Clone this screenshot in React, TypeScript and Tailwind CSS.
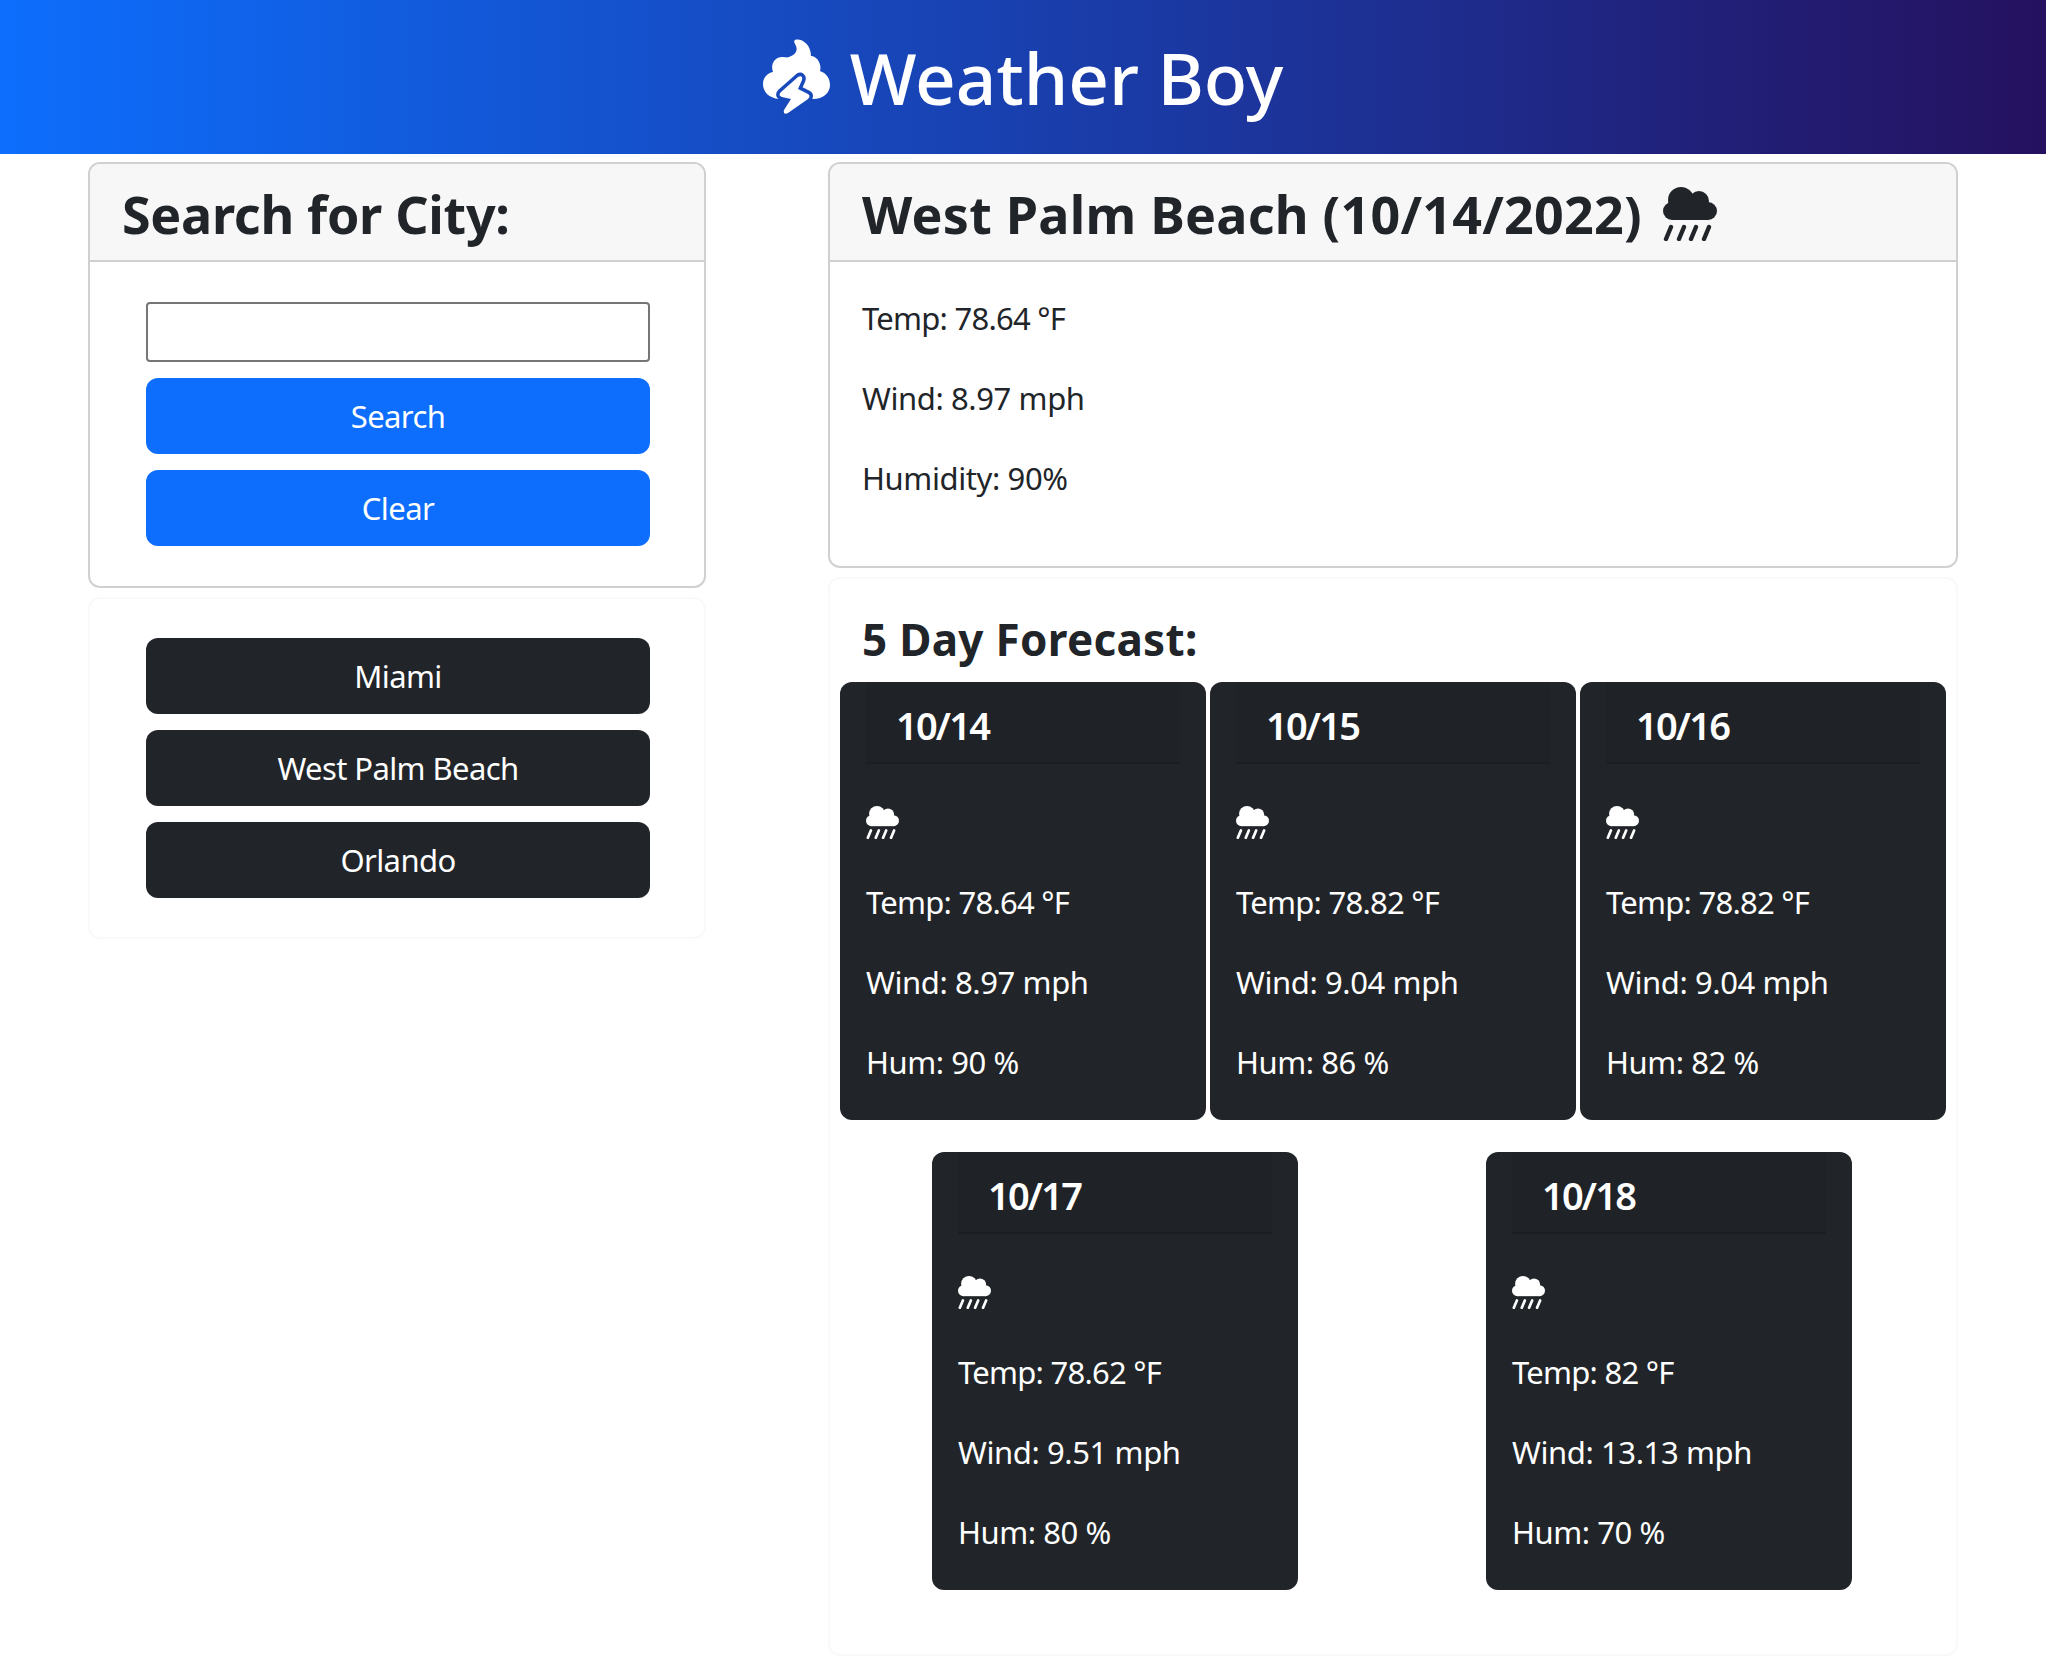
import React from "react";

const F = "font-['Noto_Sans','Open_Sans',sans-serif]";

function Rain({ className }: { className: string }) {
  return (
    <svg viewBox="0 0 54 54" className={className} fill="currentColor" aria-hidden="true">
      <circle cx="18" cy="13" r="13" />
      <circle cx="36" cy="14" r="10" />
      <circle cx="9" cy="24" r="9" />
      <circle cx="45" cy="24" r="9" />
      <rect x="9" y="14" width="36" height="19" />
      <g stroke="currentColor" strokeWidth="4.4" strokeLinecap="round" fill="none">
        <path d="M8 40 3 52" />
        <path d="M21 40 16 52" />
        <path d="M33 40 28 52" />
        <path d="M46 40 41 52" />
      </g>
    </svg>
  );
}

function Logo() {
  return (
    <svg viewBox="0 0 67 76" className="w-[67px] h-[76px] shrink-0" aria-hidden="true">
      <path
        fill="#fff"
        d="M32 1C38 -1 48 5 48 17C54 17 59 25 57 32C63 34 67 39 67 46C67 54 60 60 50 60L16 60C6 59 0 53 0 45C0 39 4 34 10 33C7 25 12 18 19 18C22 18 24 19 26 18C32 16 35 12 33 7C32 4 30 3 32 1Z"
      />
      <path
        fill="#fff"
        stroke="#1749bb"
        strokeWidth="7"
        strokeLinejoin="round"
        paintOrder="stroke"
        d="M18 53 35 38C38 36 40 38 39 41L35 50 45 55C47 56 47 58 45 60L25 74C22 76 20 74 21 71L28 60 19 58C16 57 16 55 18 53Z"
      />
    </svg>
  );
}

function Forecast({ date, temp, wind, hum }: { date: string; temp: string; wind: string; hum: string }) {
  return (
    <div className="w-[366px] h-[438px] rounded-xl bg-[#212529] text-white px-[26px]">
      <div className="h-[82px] bg-black/[0.03] border-b-2 border-black/[0.125] pl-[30px] pr-8 pt-[19px]">
        <h5 className="text-[38px] leading-[48px] font-semibold tracking-[-1.8px]">{date}</h5>
      </div>
      <div className="h-[114px] flex items-center pt-[2px]">
        <Rain className="w-[33px] h-[33px] text-white" />
      </div>
      <p className="text-[31px] leading-[48px] mb-8 tracking-[-0.75px]">Temp: {temp} °F</p>
      <p className="text-[31px] leading-[48px] mb-8 tracking-[-0.4px]">Wind: {wind} mph</p>
      <p className="text-[31px] leading-[48px] tracking-[-0.45px]">Hum: {hum} %</p>
    </div>
  );
}

function Btn({ children, dark }: { children: string; dark?: boolean }) {
  return (
    <button
      type="button"
      className={`h-[76px] w-full rounded-xl text-white text-[31px] leading-[48px] tracking-[-0.6px] ${dark ? "bg-[#212529]" : "bg-[#0d6efd]"}`}
    >
      {children}
    </button>
  );
}

export default function App() {
  return (
    <div className={`${F} bg-white text-[#212529] min-h-[1664px]`}>
      <header className="h-[154px] bg-linear-to-r/srgb from-[#0d6efd] to-[#25115f] flex items-center justify-center gap-[20px] text-white">
        <Logo />
        <h1 className="text-[71px] leading-[90px] font-medium pt-[2px]">Weather Boy</h1>
      </header>
      <main className="flex justify-between px-[88px] pt-2">
        <div className="w-[618px] flex flex-col gap-[9px]">
          <section className="h-[426px] border-2 border-[#d0d0d0] rounded-xl overflow-hidden">
            <div className="h-[98px] bg-[#f7f7f7] border-b-2 border-[#d0d0d0] px-8 flex items-center pt-[3px]">
              <h3 className="text-[52px] leading-[64px] font-bold tracking-[-0.3px]">Search for City:</h3>
            </div>
            <div className="pl-14 pr-[54px] pt-10 flex flex-col gap-4">
              <input type="text" aria-label="City" className="h-[60px] border-2 border-[#767676] rounded bg-white" />
              <Btn>Search</Btn>
              <Btn>Clear</Btn>
            </div>
          </section>
          <section className="h-[342px] border-2 border-[#f8f9fa] rounded-xl pl-14 pr-[54px] pt-[39px] flex flex-col gap-4">
            <Btn dark>Miami</Btn>
            <Btn dark>West Palm Beach</Btn>
            <Btn dark>Orlando</Btn>
          </section>
        </div>
        <div className="w-[1130px] flex flex-col gap-[9px]">
          <section className="h-[406px] border-2 border-[#d0d0d0] rounded-xl overflow-hidden">
            <div className="h-[98px] bg-[#f7f7f7] border-b-2 border-[#d0d0d0] px-8 flex items-center gap-[21px] pt-[3px]">
              <h3 className="text-[52px] leading-[64px] font-bold tracking-[0.25px]">West Palm Beach (10/14/2022)</h3>
              <Rain className="w-[54px] h-[54px] text-[#212529]" />
            </div>
            <div className="px-8 pt-8">
              <p className="text-[31px] leading-[48px] mb-8 tracking-[-0.75px]">Temp: 78.64 °F</p>
              <p className="text-[31px] leading-[48px] mb-8 tracking-[-0.4px]">Wind: 8.97 mph</p>
              <p className="text-[31px] leading-[48px] tracking-[-0.4px]">Humidity: 90%</p>
            </div>
          </section>
          <section className="h-[1079px] border-2 border-[#f8f9fa] rounded-xl px-2">
            <h4 className="text-[44px] leading-[56px] font-bold tracking-[0.3px] pl-6 pt-[32px] pb-[15px]">5 Day Forecast:</h4>
            <div className="flex justify-around">
              <Forecast date="10/14" temp="78.64" wind="8.97" hum="90" />
              <Forecast date="10/15" temp="78.82" wind="9.04" hum="86" />
              <Forecast date="10/16" temp="78.82" wind="9.04" hum="82" />
            </div>
            <div className="flex justify-around mt-8 pr-[2px]">
              <Forecast date="10/17" temp="78.62" wind="9.51" hum="80" />
              <Forecast date="10/18" temp="82" wind="13.13" hum="70" />
            </div>
          </section>
        </div>
      </main>
    </div>
  );
}
